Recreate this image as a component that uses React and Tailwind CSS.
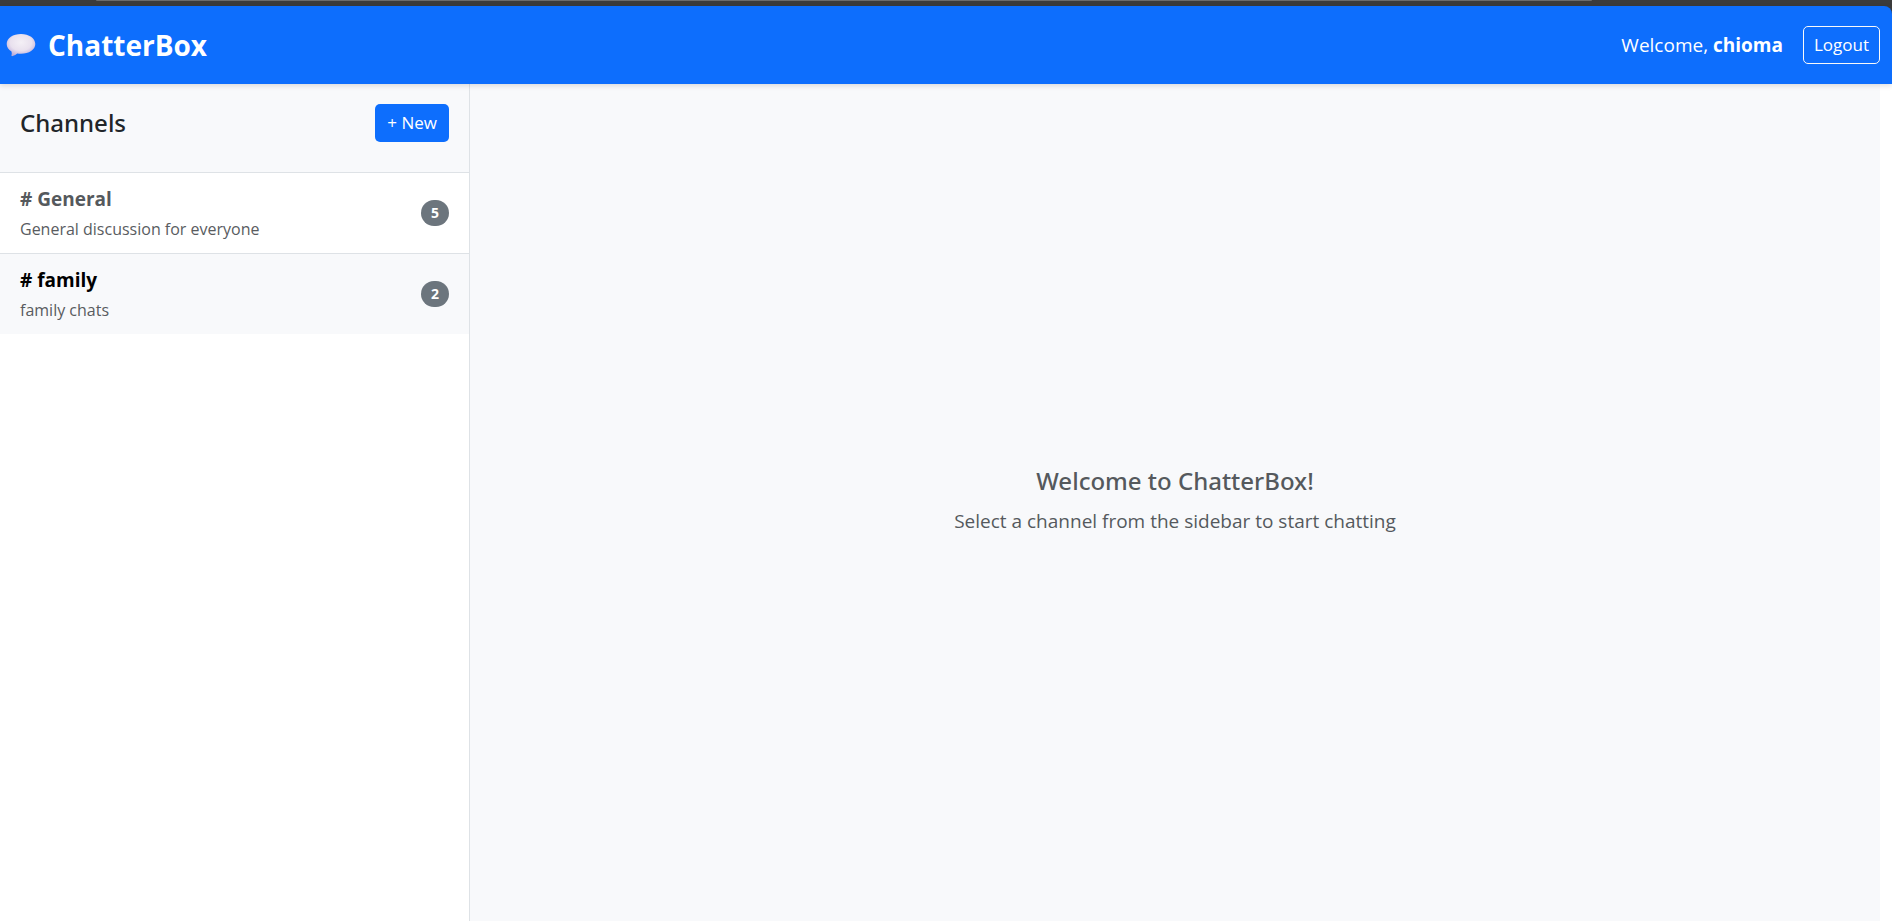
const channels = [
  { name: "General", description: "General discussion for everyone", count: 5, active: false },
  { name: "family", description: "family chats", count: 2, active: true },
];

function BubbleIcon() {
  return (
    <svg viewBox="0 0 30 24" className="h-6 w-[30px]" aria-hidden="true">
      <defs>
        <radialGradient id="bubble" cx="0.5" cy="0.38" r="0.62">
          <stop offset="0" stopColor="#f4f0f6" />
          <stop offset="0.6" stopColor="#e9e1ee" />
          <stop offset="1" stopColor="#bcadda" />
        </radialGradient>
      </defs>
      <path
        d="M15 1C7 1 .7 5.100.7 11c0 3.200 1.800 5.800 4.800 7.600.4 1.500.4 2.700 0 3.700-.3.700.4 1.100 1.100.8 2-.8 3.400-1.600 4.600-2.700 1.200.2 2.500.3 3.800.3C23 20.700 29.300 16.700 29.300 11S23 1 15 1Z"
        fill="url(#bubble)"
      />
    </svg>
  );
}

function Channel({ name, description, count, active }) {
  return (
    <li className={active ? "bg-[#f8f9fb]" : "bg-white"}>
      <a href="#" className="flex items-center justify-between px-5 py-[10px]">
        <span className="flex flex-col">
          <strong className={active ? "text-[19px] leading-[32px] font-bold text-black" : "text-[19px] leading-[32px] font-bold text-[#55595d]"}>
            # {name}
          </strong>
          <span className="text-[16px] leading-[28px] text-[#595c5f]">{description}</span>
        </span>
        <span className="rounded-full bg-[#6c757d] px-[10px] text-[14px] leading-[26px] font-bold text-white">{count}</span>
      </a>
    </li>
  );
}

export default function App() {
  return (
    <div className="flex min-h-screen flex-col bg-white font-['Open_Sans','Noto_Sans',sans-serif] text-[#212529]">
      <div className="h-[6px] bg-[#3b3b3b] px-24">
        <div className="mr-[204px] h-px rounded-b-full bg-[#6b6b6b]" />
      </div>
      <div className="z-10 bg-[#3b3b3b] shadow-[0_2px_5px_rgba(0,0,0,0.12)]">
        <header className="flex h-[78px] items-center justify-between rounded-tr-lg bg-[#0d6efd] pr-3 pl-[6px] text-white">
          <h1 className="flex items-center gap-3">
            <BubbleIcon />
            <span className="text-[28px] leading-[44px] font-bold">ChatterBox</span>
          </h1>
          <div className="flex items-center gap-5">
            <span className="text-[19px] leading-[30px]">
              Welcome, <strong className="font-bold">chioma</strong>
            </span>
            <button type="button" className="h-[38px] rounded-[5px] border border-[#f8f9fa] px-[10px] text-[17px] leading-[26px]">
              Logout
            </button>
          </div>
        </header>
      </div>
      <div className="flex grow pr-3">
        <aside className="w-1/4 border-r border-[#dee2e6] bg-white">
          <div className="flex h-[89px] items-start justify-between border-b border-[#dee2e6] bg-[#f8f9fb] px-5 pt-5">
            <h2 className="font-['Noto_Sans',sans-serif] text-[24px] leading-[38px] font-medium">Channels</h2>
            <button type="button" className="h-[38px] rounded-[5px] bg-[#0d6efd] px-3 text-[17px] leading-[26px] text-white">
              + New
            </button>
          </div>
          <ul className="divide-y divide-[#dee2e6]">
            {channels.map((channel) => (
              <Channel key={channel.name} {...channel} />
            ))}
          </ul>
        </aside>
        <main className="flex w-3/4 flex-col items-center justify-center gap-[10px] bg-[#f8f9fb] pb-1 text-[#55595d]">
          <h2 className="font-['Noto_Sans',sans-serif] text-[24px] leading-[30px] font-medium">Welcome to ChatterBox!</h2>
          <p className="text-[19px] leading-[30px]">Select a channel from the sidebar to start chatting</p>
        </main>
      </div>
    </div>
  );
}
